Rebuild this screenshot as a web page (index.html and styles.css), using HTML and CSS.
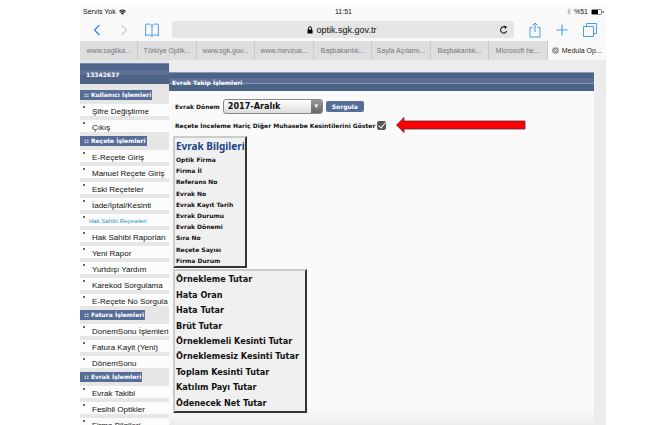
FILE: index.html
```html
<!DOCTYPE html>
<html lang="tr">
<head>
<meta charset="utf-8">
<title>Medula Optik</title>
<link rel="stylesheet" href="styles.css">
</head>
<body>
<div class="device">
  <header class="chrome">
    <div class="status">
      <span class="carrier">Servis Yok
        <svg width="7" height="6" viewBox="0 0 14 12"><path d="M0 4a10 10 0 0 1 14 0L7 12z" fill="#333"/><path d="M1.500 5.800a8 8 0 0 1 11 0M3.800 8.300a5 5 0 0 1 6.400 0" fill="none" stroke="#f8f8f8" stroke-width=".9"/></svg>
      </span>
      <span class="clock">11:51</span>
      <span class="power">
        <svg width="4" height="7" viewBox="0 0 8 14"><path d="M1 4l6 6-3 3V1l3 3-6 6" fill="none" stroke="#888" stroke-width="1"/></svg>
        %51
        <svg width="13" height="6" viewBox="0 0 13 6"><rect x=".5" y=".5" width="10" height="5" rx="1" fill="#fff" stroke="#555" stroke-width=".7"/><rect x="1" y="1" width="6" height="4" fill="#000"/><path d="M12 2v2" stroke="#444"/></svg>
      </span>
    </div>
    <nav class="toolbar">
      <button class="tool" aria-label="Geri"><svg width="8" height="12" viewBox="0 0 8 12"><path d="M6.500 1L1.500 6l5 5" fill="none" stroke="#2f8ae8" stroke-width="1.300"/></svg></button>
      <button class="tool" aria-label="İleri"><svg width="8" height="12" viewBox="0 0 8 12"><path d="M1.500 1l5 5-5 5" fill="none" stroke="#ccc" stroke-width="1.100"/></svg></button>
      <button class="tool" aria-label="Yer imleri"><svg width="14" height="14" viewBox="0 0 14 14"><path d="M7 2.500C5 .5 2.500.5.600 1.800v11C2.500 11.500 5 11.500 7 13.200c2-1.700 4.500-1.700 6.400-.4v-11C11.500.5 9 .5 7 2.500zM7 2.500v10.700" fill="none" stroke="#4a9be8" stroke-width="1"/></svg></button>
      <div class="address">
        <span class="host"><svg width="6" height="8" viewBox="0 0 6 8"><rect x=".5" y="3.500" width="5" height="4" rx=".5"/><path d="M1.500 4V2.200a1.500 1.500 0 0 1 3 0V4" fill="none" stroke="#000" stroke-width=".9"/></svg>optik.sgk.gov.tr</span>
        <button class="tool reload" aria-label="Yenile"><svg width="9" height="10" viewBox="0 0 9 10"><path d="M7.200 3.200A3.100 3.100 0 1 0 7.600 6" fill="none" stroke="#222" stroke-width="1.100"/><path d="M4.700.5l3.300 1L6.200 4z" fill="#222"/></svg></button>
      </div>
      <button class="tool" aria-label="Paylaş"><svg width="12" height="16" viewBox="0 0 12 16"><path d="M3.500 5.500H1v9.500h10V5.500H8.500M6 10V1M3.500 3.500L6 1l2.500 2.500" fill="none" stroke="#4a9be8" stroke-width="1"/></svg></button>
      <button class="tool" aria-label="Yeni sekme"><svg width="12" height="12" viewBox="0 0 12 12"><path d="M6 .5v11M.5 6h11" stroke="#4a9be8" stroke-width="1.100"/></svg></button>
      <button class="tool" aria-label="Sekmeler"><svg width="14" height="14" viewBox="0 0 14 14"><path d="M3.500 3.500V.5h10v10h-3M.5 3.500h10v10H.5z" fill="none" stroke="#4a9be8" stroke-width="1"/></svg></button>
    </nav>
    <nav class="tabs">
      <a href="#">www.saglika...</a>
      <a href="#">Türkiye Optik...</a>
      <a href="#">www.sgk.gov...</a>
      <a href="#">www.mevzua...</a>
      <a href="#">Başbakanlık...</a>
      <a href="#">Sayfa Açılamı...</a>
      <a href="#">Başbakanlık...</a>
      <a href="#">Microsoft he...</a>
      <a href="#" class="current"><svg width="7" height="7" viewBox="0 0 7 7"><circle cx="3.500" cy="3.500" r="3.300" fill="#999"/><path d="M2.200 2.200l2.600 2.600M4.800 2.200L2.200 4.800" stroke="#fff" stroke-width=".8"/></svg>Medula Op...</a>
    </nav>
  </header>
  <div class="page">
    <aside class="menu">
      <div class="account">13342637</div>
      <h2><span>:: Kullanıcı İşlemleri</span></h2>
      <ul>
        <li><a href="#">Şifre Değiştirme</a></li>
        <li><a href="#">Çıkış</a></li>
      </ul>
      <h2><span>:: Reçete İşlemleri</span></h2>
      <ul>
        <li><a href="#">E-Reçete Giriş</a></li>
        <li><a href="#">Manuel Reçete Giriş</a></li>
        <li><a href="#">Eski Reçeteler</a></li>
        <li><a href="#">İade/İptal/Kesinti</a></li>
        <li class="active"><a href="#">Hak Sahibi Reçeteleri</a></li>
        <li><a href="#">Hak Sahibi Raporları</a></li>
        <li><a href="#">Yeni Rapor</a></li>
        <li><a href="#">Yurtdışı Yardım</a></li>
        <li><a href="#">Karekod Sorgulama</a></li>
        <li><a href="#">E-Reçete No Sorgula</a></li>
      </ul>
      <h2><span>:: Fatura İşlemleri</span></h2>
      <ul>
        <li><a href="#">DonemSonu İşlemleri</a></li>
        <li><a href="#">Fatura Kayit (Yeni)</a></li>
        <li><a href="#">DönemSonu</a></li>
      </ul>
      <h2><span>:: Evrak İşlemleri</span></h2>
      <ul>
        <li><a href="#">Evrak Takibi</a></li>
        <li><a href="#">Fesihli Optikler</a></li>
        <li><a href="#">Firma Bilgileri</a></li>
      </ul>
    </aside>
    <main class="content">
      <h1>Evrak Takip İşlemleri</h1>
      <form class="panel">
        <div class="row">
          <label for="term">Evrak Dönem</label>
          <span class="picker"><select id="term"><option>2017-Aralık</option></select></span>
          <button type="button" class="query">Sorgula</button>
        </div>
        <div class="row option">
          <label for="cuts">Reçete İnceleme Hariç Diğer Muhasebe Kesintilerini Göster</label>
          <input type="checkbox" id="cuts" checked>
          <svg class="arrow" width="130" height="16" viewBox="0 0 130 16"><path d="M.5 8L8 .5V4h121v8H8v3.500z" fill="#f00" stroke="#5a2440" stroke-width=".8"/></svg>
        </div>
        <table class="box details">
          <thead>
            <tr><th>Evrak Bilgileri</th></tr>
          </thead>
          <tbody>
            <tr><th>Optik Firma</th></tr>
            <tr><th>Firma İl</th></tr>
            <tr><th>Referans No</th></tr>
            <tr><th>Evrak No</th></tr>
            <tr><th>Evrak Kayıt Tarih</th></tr>
            <tr><th>Evrak Durumu</th></tr>
            <tr><th>Evrak Dönemi</th></tr>
            <tr><th>Sıra No</th></tr>
            <tr><th>Reçete Sayısı</th></tr>
            <tr><th>Firma Durum</th></tr>
          </tbody>
        </table>
        <table class="box totals">
          <tbody>
            <tr><th>Örnekleme Tutar</th></tr>
            <tr><th>Hata Oran</th></tr>
            <tr><th>Hata Tutar</th></tr>
            <tr><th>Brüt Tutar</th></tr>
            <tr><th>Örneklemeli Kesinti Tutar</th></tr>
            <tr><th>Örneklemesiz Kesinti Tutar</th></tr>
            <tr><th>Toplam Kesinti Tutar</th></tr>
            <tr><th>Katılım Payı Tutar</th></tr>
            <tr><th>Ödenecek Net Tutar</th></tr>
          </tbody>
        </table>
      </form>
    </main>
  </div>
</div>
</body>
</html>
```
FILE: styles.css
```css
* { box-sizing: border-box; }
html { height: 100%; }
body {
  margin: 0;
  height: 100%;
  overflow: hidden;
  background: #fff;
  color: #111;
  font-family: "DejaVu Sans", sans-serif;
  font-size: 6px;
}
a { color: inherit; text-decoration: none; }
button { font: inherit; }
svg { display: block; flex: none; }

.device {
  display: flex;
  flex-direction: column;
  height: 100%;
  margin: 0 57px 0 80px;
  padding-top: 5px;
}
.chrome { background: #f9f9f9; font-family: "Liberation Sans", sans-serif; font-size: 7px; }
.status {
  display: grid;
  grid-template-columns: 1fr auto 1fr;
  height: 13px;
  align-items: center;
  padding: 0 2px 0 3px;
  line-height: 12px;
}
.carrier, .power { display: flex; align-items: center; gap: 3px; }
.power { justify-content: flex-end; }
.toolbar {
  display: flex;
  align-items: center;
  gap: 15px;
  height: 23px;
  padding: 0 9px 0 13px;
}
.tool { display: flex; padding: 0; border: 0; background: none; }
.tool:nth-child(2) { margin: 0 2px 0 4px; }
.address {
  display: flex;
  flex: 1;
  align-items: center;
  height: 17px;
  margin-left: -2px;
  padding: 0 4px 0 16px;
  border-radius: 3px;
  background: #e5e5e5;
  font-size: 9px;
}
.host { display: flex; flex: 1; justify-content: center; align-items: center; gap: 4px; }
.tabs {
  display: grid;
  grid-template-columns: repeat(9, 1fr);
  height: 19px;
  border-bottom: 1px solid #ccc;
  line-height: 19px;
}
.tabs a {
  display: flex;
  justify-content: center;
  align-items: center;
  gap: 3px;
  border-right: 1px solid #ccc;
  background: #dedee0;
  color: #777;
  white-space: nowrap;
}
.tabs .current { border: 0; background: #f9f9f9; color: #222; }

.page {
  display: flex;
  flex: 1;
  min-height: 0;
  overflow: hidden;
  background: #ececec;
}
.menu { flex: none; width: 89px; padding-top: 3px; background: #e6e6e6; }
.account {
  height: 21px;
  margin-bottom: 4px;
  padding-left: 6px;
  border-top: 1px solid #7486ad;
  border-bottom: 1px solid #475d80;
  background: linear-gradient(#4d6389 0 30%, #5f7093 30% 60%, #4d6385 60%);
  color: #fff;
  font-weight: bold;
  line-height: 22px;
}
.menu h2 { height: 14px; margin: 0; padding-top: 2px; font-size: 6px; line-height: 10px; }
.menu h2 span { display: block; width: max-content; padding: 0 1px 0 4px; background: #566d97; color: #fff; }
.menu ul { margin: 0; padding: 0; list-style: none; }
.menu li {
  display: flex;
  height: 16px;
  border-top: 2px solid #e6e6e6;
  border-bottom: 2px solid #e6e6e6;
  background: #fcfcfc;
  font: 8px/15px "Liberation Sans", sans-serif;
  white-space: nowrap;
}
.menu li::before {
  content: "";
  flex: none;
  width: 2px;
  height: 2px;
  margin: 2px 7px 0 3px;
  border-radius: 1px;
  background: #333;
}
.menu .active { font-size: 6px; color: #1c9ad6; }
.menu .active::before { margin-right: 4px; }

.content {
  flex: 1;
  margin-right: 12px;
  padding-top: 12px;
  background: linear-gradient(#ececec 0 12px, #fafafa 12px 350px, #ececec);
}
h1 {
  height: 19px;
  margin: 0;
  padding-left: 3px;
  border-top: 1px solid #8797b7;
  background: linear-gradient(#4d6389 0 25%, #5d6f95 25% 55%, #8595b3 55% 62%, #4d6385 62%);
  color: #fff;
  font-size: 6px;
  line-height: 19px;
}
.panel { padding: 7px 6px 0; font-weight: bold; }
.row { display: flex; align-items: center; height: 16px; gap: 3px; }
.picker { position: relative; display: flex; width: 100px; height: 15px; }
.picker::after {
  content: "▾";
  position: absolute;
  inset: 1px 1px 1px auto;
  width: 11px;
  border-radius: 0 2px 2px 0;
  background: linear-gradient(#999, #666);
  color: #fff;
  font-size: 7px;
  line-height: 12px;
  text-align: center;
  pointer-events: none;
}
select {
  appearance: none;
  width: 100%;
  padding: 0 4px;
  border: 1px solid #888;
  border-radius: 3px;
  background: linear-gradient(#fff, #ddd);
  color: #111;
  font: bold 9px "DejaVu Sans Condensed", "DejaVu Sans", sans-serif;
}
.query {
  height: 11px;
  padding: 0 6px;
  border: 0;
  border-radius: 2px;
  background: #566d97;
  color: #fff;
  font-weight: bold;
  line-height: 11px;
}
.option { margin: 3px 0; gap: 2px; }
input[type="checkbox"] {
  appearance: none;
  display: flex;
  width: 9px;
  height: 9px;
  margin: 0;
  border-radius: 2px;
  background: #555;
}
input[type="checkbox"]:checked::after {
  content: "";
  width: 3px;
  height: 6px;
  margin: 0 auto;
  border: solid #fff;
  border-width: 0 1px 1px 0;
  transform: rotate(40deg);
}
.arrow { margin-left: 8px; }
.box {
  margin-left: -2px;
  padding-left: 1px;
  border: 2px solid;
  border-color: #ccc #333 #333 #ccc;
  background: #f0f0f0;
  border-spacing: 0;
  white-space: nowrap;
}
.box th { padding: 0; text-align: left; }
.details { width: 74px; height: 132px; margin-bottom: 1px; }
.details thead th { height: 16px; color: #1c4587; font: bold 10px/16px "Noto Sans", sans-serif; }
.details tbody th { font-size: 6px; line-height: 11px; }
.totals { width: 134px; height: 144px; padding-top: 1px; }
.totals th { font: bold 9px/15px "DejaVu Sans Condensed", "DejaVu Sans", sans-serif; }
```
